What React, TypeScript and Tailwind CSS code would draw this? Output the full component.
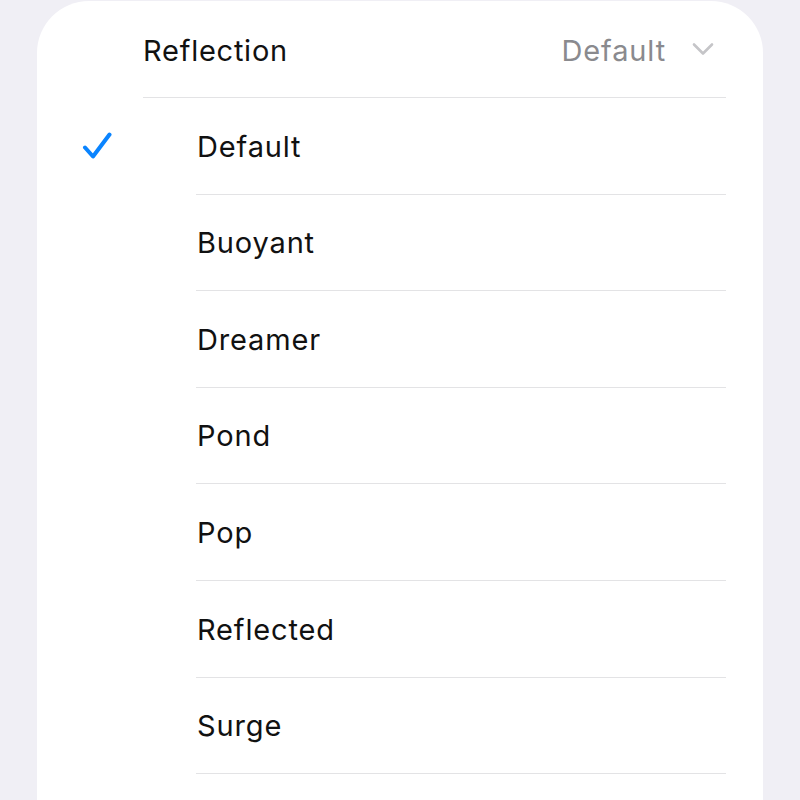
import React from 'react';

const options = ['Default', 'Buoyant', 'Dreamer', 'Pond', 'Pop', 'Reflected', 'Surge'];

const Check = () => (
  <svg width="30" height="30" viewBox="0 0 30 30" fill="none">
    <path d="M3 16.5 L11 25.5 L27.5 3.5" stroke="#0a84ff" strokeWidth="4" strokeLinecap="round" strokeLinejoin="round" />
  </svg>
);

const Chevron = () => (
  <svg width="22" height="14" viewBox="0 0 22 14" fill="none">
    <path d="M2 2.5 L11 11.5 L20 2.5" stroke="#c5c5c8" strokeWidth="2.6" strokeLinecap="round" strokeLinejoin="round" />
  </svg>
);

const App: React.FC = () => {
  const selected = 'Default';

  return (
    <div
      className="w-[800px] h-[800px] overflow-hidden bg-[#f0eff5] pt-[1px]"
      style={{ fontFamily: 'Inter, "Noto Sans", sans-serif' }}
    >
      <div className="mx-[37px] h-[850px] rounded-t-[52px] bg-white">
        {/* header */}
        <div className="ml-[106px] mr-[37px] h-[97px] flex items-center justify-between border-b-[1.5px] border-[#e3e3e5]">
          <span className="text-[29px] text-[#111] tracking-[0.75px] pt-[3px]">Reflection</span>
          <div className="flex items-center gap-[26px] pr-[12px]">
            <span className="text-[29px] text-[#8a8a8e] tracking-[0.85px] pt-[3px]">Default</span>
            <Chevron />
          </div>
        </div>

        {/* options */}
        {options.map((name) => (
          <div key={name} className="flex h-[96.6px]">
            <div className="w-[159px] flex items-center pl-[45px]">
              {name === selected && <Check />}
            </div>
            <div className="flex-1 mr-[37px] flex items-center border-b-[1.5px] border-[#e3e3e5]">
              <span className="text-[29px] text-[#111] tracking-[0.85px] pl-[1px] pt-[1px]">{name}</span>
            </div>
          </div>
        ))}
      </div>
    </div>
  );
};

export default App;
